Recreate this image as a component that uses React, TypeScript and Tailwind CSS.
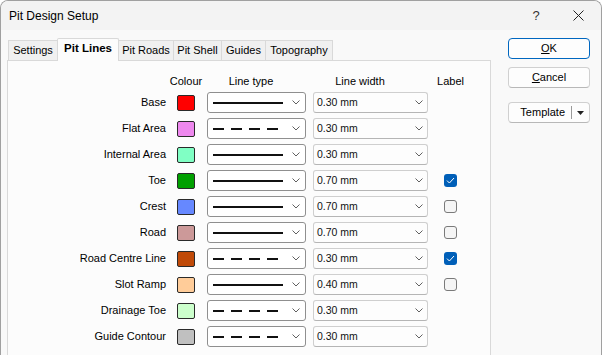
import React from 'react';

type Row = {
  name: string;
  colour: string;
  dashed: boolean;
  width: string;
  label?: boolean;
};

const rows: Row[] = [
  { name: 'Base', colour: '#ff0000', dashed: false, width: '0.30 mm' },
  { name: 'Flat Area', colour: '#ee88ee', dashed: true, width: '0.30 mm' },
  { name: 'Internal Area', colour: '#80ffc4', dashed: false, width: '0.30 mm' },
  { name: 'Toe', colour: '#00a000', dashed: false, width: '0.70 mm', label: true },
  { name: 'Crest', colour: '#6688ff', dashed: false, width: '0.70 mm', label: false },
  { name: 'Road', colour: '#cc9999', dashed: false, width: '0.70 mm', label: false },
  { name: 'Road Centre Line', colour: '#c04a08', dashed: true, width: '0.30 mm', label: true },
  { name: 'Slot Ramp', colour: '#ffcc99', dashed: false, width: '0.40 mm', label: false },
  { name: 'Drainage Toe', colour: '#ccffcc', dashed: true, width: '0.30 mm' },
  { name: 'Guide Contour', colour: '#c0c0c0', dashed: true, width: '0.30 mm' },
];

const tabs = [
  { name: 'Settings', w: 'w-[50px]' },
  { name: 'Pit Lines', w: 'w-[62px]', active: true },
  { name: 'Pit Roads', w: 'w-[56px]' },
  { name: 'Pit Shell', w: 'w-[49px]' },
  { name: 'Guides', w: 'w-[45px]' },
  { name: 'Topography', w: 'w-[68px]' },
];

const Chevron = () => (
  <svg width="8" height="5" viewBox="0 0 8 5" className="shrink-0">
    <path d="M0.5 0.5 L4 4 L7.5 0.5" fill="none" stroke="#606060" strokeWidth="1" />
  </svg>
);

const Check = ({ on }: { on?: boolean }) =>
  on ? (
    <div className="w-[13px] h-[13px] rounded-[3px] bg-[#005fb8] flex items-center justify-center">
      <svg width="9" height="7" viewBox="0 0 9 7">
        <path d="M1 3.6 L3.4 6 L8 1" fill="none" stroke="#ffffff" strokeWidth="1" />
      </svg>
    </div>
  ) : (
    <div className="w-[13px] h-[13px] rounded-[3px] bg-[#f5f5f5] border border-[#7a7a7a]" />
  );

export default function App() {
  return (
    <div className="w-[602px] h-[355px] overflow-hidden border border-b-0 border-[#a0a0a0] rounded-t-[8px] bg-[#f9f9f9] text-[11px] text-black font-['Liberation_Sans',Arial,sans-serif]">
      {/* title bar */}
      <div className="h-[29px] bg-[#f3f3f3] flex items-center pl-[8px]">
        <span className="text-[12px] flex-1">Pit Design Setup</span>
        <span className="text-[13px] w-[14px] text-center mr-[30px] text-[#333]">?</span>
        <svg width="11" height="11" viewBox="0 0 11 11" className="mr-[17px]">
          <path d="M0.5 0.5 L10.5 10.5 M10.5 0.5 L0.5 10.5" stroke="#222" strokeWidth="1" />
        </svg>
      </div>

      <div className="flex pl-[6px]">
        {/* left: tabs + panel */}
        <div className="w-[484px] mt-[8px] flex flex-col">
          <div className="h-[22px] flex items-end pl-[2px]">
            {tabs.map((t) =>
              t.active ? (
                <div
                  key={t.name}
                  className={`${t.w} h-[23px] -mb-px -ml-px relative z-10 bg-[#fcfcfc] border border-b-0 border-[#d9d9d9] rounded-t-[2px] flex items-center justify-center font-bold text-[11.5px] pb-[3px]`}
                >
                  {t.name}
                </div>
              ) : (
                <div
                  key={t.name}
                  className={`${t.w} h-[20px] -ml-px bg-[#f0f0f0] border border-b-0 border-[#d9d9d9] flex items-center justify-center`}
                >
                  {t.name}
                </div>
              )
            )}
          </div>

          <div className="h-[300px] bg-[#fcfcfc] border border-[#d9d9d9] pt-[12px]">
            {/* header */}
            <div className="flex h-[16px] items-center">
              <div className="w-[158px]" />
              <div className="w-[18px] ml-[11px] flex justify-center whitespace-nowrap">Colour</div>
              <div className="w-[99px] ml-[12px] pr-[11px] flex justify-center whitespace-nowrap">Line type</div>
              <div className="w-[115px] ml-[7px] pr-[21px] flex justify-center whitespace-nowrap">Line width</div>
              <div className="w-[13px] ml-[16px] flex justify-center whitespace-nowrap">Label</div>
            </div>

            <div className="mt-[3px] flex flex-col gap-[5px]">
              {rows.map((r) => (
                <div key={r.name} className="flex h-[21px] items-center">
                  <div className="w-[158px] text-right whitespace-nowrap">{r.name}</div>
                  <div
                    className="w-[18px] h-[16px] ml-[11px] border border-[#2a2a2a] rounded-[2px]"
                    style={{ backgroundColor: r.colour }}
                  />
                  <div className="w-[99px] h-[21px] ml-[12px] bg-white border border-[#8f8f8f] rounded-[3px] flex items-center justify-between pl-[5px] pr-[5px]">
                    <svg width="70" height="2" viewBox="0 0 70 2">
                      {r.dashed ? (
                        <line x1="0" y1="1" x2="66" y2="1" stroke="#111" strokeWidth="2" strokeDasharray="11 7" />
                      ) : (
                        <line x1="0" y1="1" x2="70" y2="1" stroke="#111" strokeWidth="2" />
                      )}
                    </svg>
                    <Chevron />
                  </div>
                  <div className="w-[115px] h-[21px] ml-[7px] bg-[#fdfdfd] border border-[#cfcfcf] border-b-[#b5b5b5] rounded-[3px] flex items-center justify-between pl-[3px] pr-[4px]">
                    <span className="text-[10.5px] text-[#111]">{r.width}</span>
                    <Chevron />
                  </div>
                  <div className="w-[13px] ml-[16px]">
                    {r.label !== undefined && <Check on={r.label} />}
                  </div>
                </div>
              ))}
            </div>
          </div>
        </div>

        {/* right: buttons */}
        <div className="ml-[17px] w-[82px] pt-[8px] flex flex-col">
          <button className="h-[21px] bg-[#fdfdfd] border border-[#0067c0] rounded-[4px] flex items-center justify-center">
            <span>
              <span className="underline">O</span>K
            </span>
          </button>
          <button className="h-[21px] mt-[8px] bg-[#fdfdfd] border border-[#d0d0d0] border-b-[#b8b8b8] rounded-[4px] flex items-center justify-center">
            <span>
              <span className="underline">C</span>ancel
            </span>
          </button>
          <button className="h-[21px] mt-[14px] bg-[#fdfdfd] border border-[#d0d0d0] border-b-[#b8b8b8] rounded-[4px] flex items-center justify-end pr-[5px]">
            <span>Template</span>
            <span className="w-px h-[13px] bg-[#9a9a9a] ml-[6px] mr-[5px]" />
            <svg width="7" height="4" viewBox="0 0 7 4">
              <path d="M0 0 H7 L3.5 4 Z" fill="#222" />
            </svg>
          </button>
        </div>
      </div>
    </div>
  );
}
